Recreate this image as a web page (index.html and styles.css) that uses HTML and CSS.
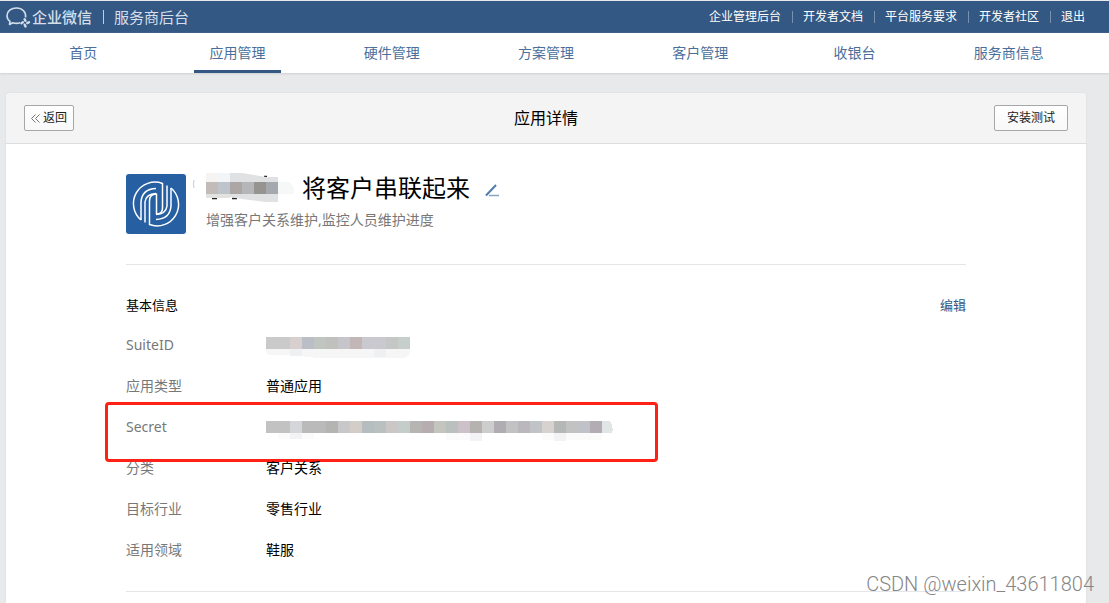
FILE: index.html
```html
<!DOCTYPE html>
<html lang="zh-CN">
<head>
<meta charset="utf-8">
<meta name="viewport" content="width=device-width, initial-scale=1">
<title>应用详情 - 服务商后台</title>
<link rel="stylesheet" href="styles.css">
</head>
<body>
<header class="topbar">
  <div class="brand">
    <svg class="brand-icon" width="25" height="22" viewBox="0 0 25 22" fill="none" stroke="#d5dfeb" aria-hidden="true">
      <path d="M19.500 11.500C20.500 6 16.200 2 10.500 2C5 2 1 5.400 1 9.700c0 2.400 1.200 4.300 3 5.700L3.500 18.500l3.300-1.700c2 .6 4.800.7 7.200 0" stroke-width="1.600" stroke-linejoin="round"/>
      <path d="M18.600 13.300l.9 1.500M23 16.200l-1.700.9M19.500 20.400l-.8-1.700M15.400 17.200l1.500-.9" stroke-width="2.400" stroke-linecap="round"/>
    </svg>
    <span class="brand-name">企业微信</span>
    <span class="brand-line"></span>
    <span class="brand-sub">服务商后台</span>
  </div>
  <nav class="toplinks">
    <a href="#">企业管理后台</a>
    <a href="#">开发者文档</a>
    <a href="#">平台服务要求</a>
    <a href="#">开发者社区</a>
    <a href="#">退出</a>
  </nav>
</header>
<nav class="mainnav">
  <a href="#">首页</a>
  <a href="#" class="active">应用管理</a>
  <a href="#">硬件管理</a>
  <a href="#">方案管理</a>
  <a href="#">客户管理</a>
  <a href="#">收银台</a>
  <a href="#">服务商信息</a>
</nav>
<main class="card">
  <div class="card-head">
    <button type="button" class="btn btn-back">
      <svg width="9" height="9" viewBox="0 0 9 9" fill="none" stroke="#777" aria-hidden="true"><path d="M4.500.5l-4 4 4 4M8.500.5l-4 4 4 4"/></svg>返回
    </button>
    <h1 class="card-title">应用详情</h1>
    <button type="button" class="btn btn-test">安装测试</button>
  </div>
  <div class="card-body">
    <section class="app">
      <svg class="app-logo" width="60" height="60" viewBox="0 0 60 60" aria-hidden="true">
        <rect width="60" height="60" rx="3" fill="#275fa3"/>
        <g fill="none" stroke="#fff" stroke-width="1.500" stroke-linejoin="round">
          <path d="M15 46A21.500 21.500 0 0 1 36.500 9.500V34q0 6-6 6V20q-7 0-7 7v23.500A21.500 21.500 0 0 0 45 14"/>
          <path d="M15 46V28q1-13 15-13.500"/>
          <path d="M45 14v18q-1 13-15 13.500"/>
          <path d="M19 48.500V28q1-8 11-8.500" />
          <path d="M41 11.500V32q-1 8-11 8.500"/>
        </g>
      </svg>
      <div class="app-text">
        <div class="app-name">
          <svg class="mask-name" width="101" height="30" viewBox="0 0 101 30" aria-hidden="true">
            <path d="M1 7q-1 4 0 8" fill="none" stroke="#b5cee8"/>
            <path d="M19 25.500h5M39 25.500h5M71 3.500h3" fill="none" stroke="#222" stroke-width="1.500"/>
            <path d="M13 0h12v24H13z" fill="#f5f4f2"/>
            <path d="M13 21h24v4H13z" fill="#e2e2e1"/>
            <path d="M25 0h12v9H25z" fill="#f2f6f9"/>
            <path d="M37 0h12l24 4h12v25H73l-24-3-12-2z" fill="#e0e1e2"/>
            <path d="M85 9h11q8 6 4 12H85z" fill="#f6f7f7"/>
            <path d="M13 9h12v12H13z" fill="#c3bbb7"/>
            <path d="M25 9h12v12H25z" fill="#bdc4cb"/>
            <path d="M37 9h12v12H37z" fill="#aca6a4"/>
            <path d="M49 9h12v12H49z" fill="#b4b6b9"/>
            <path d="M61 9h12v12H61z" fill="#959491"/>
            <path d="M73 9h12v12H73z" fill="#a5a9ad"/>
          </svg>
          <h2>将客户串联起来</h2>
          <button type="button" class="edit-name" aria-label="修改名称">
            <svg width="14" height="13" viewBox="0 0 14 13" fill="none"><path d="M1 11.500L11 1" stroke="#4f7cac" stroke-width="2"/><path d="M4 11.500h10" stroke="#86a5c6" stroke-width="1.500"/></svg>
          </button>
        </div>
        <p class="app-desc">增强客户关系维护,监控人员维护进度</p>
      </div>
    </section>
    <section class="info">
      <div class="info-head">
        <h3>基本信息</h3>
        <a href="#">编辑</a>
      </div>
      <dl class="rows">
        <div class="row"><dt>SuiteID</dt><dd>
          <svg class="mask" width="144" height="21" viewBox="0 0 144 21" shape-rendering="crispEdges" aria-hidden="true">
            <path d="M0 12h144v4q-1 5-10 5H52L24 18H6Q0 18 0 12z" fill="#f6f6f6"/>
            <path d="M24 12h12v7H24zM108 12h12v8H108z" fill="#eff0f2"/>
            <path d="M0 0h24v12H0z" fill="#cbcaca"/>
            <path d="M24 0h12v12H24z" fill="#d8cfcf"/>
            <path d="M36 0h12v12H36z" fill="#babfc7"/>
            <path d="M48 0h12v12H48z" fill="#c0c5c0"/>
            <path d="M60 0h12v12H60z" fill="#c0c0bd"/>
            <path d="M72 0h12v12H72z" fill="#c6c5cb"/>
            <path d="M84 0h12v12H84z" fill="#c2b6b7"/>
            <path d="M96 0h24v12H96z" fill="#cac9cf"/>
            <path d="M120 0h12v12H120z" fill="#c5c7c7"/>
            <path d="M132 0h12v12H132z" fill="#c6cfcc"/>
          </svg></dd></div>
        <div class="row"><dt>应用类型</dt><dd>普通应用</dd></div>
        <div class="row marked"><dt>Secret</dt><dd>
          <svg class="mask mask-secret" width="347" height="20" viewBox="0 0 347 20" shape-rendering="crispEdges" aria-hidden="true">
            <path d="M12 12h36v6H12zM180 12h24v7H180zM276 12h60v7H276z" fill="#fbfbfb"/>
            <path d="M24 12h12v6H24zM204 12h12v8H204zM288 12h12v8H288z" fill="#f3f3f5"/>
            <path d="M0 0h336v12H0z" fill="#c3c2c2"/>
            <path d="M24 0h12v12H24z" fill="#d5d6d9"/>
            <path d="M36 0h24v12H36z" fill="#bababa"/>
            <path d="M60 0h12v12H60z" fill="#b4b4b2"/>
            <path d="M72 0h12v12H72z" fill="#c8c8cb"/>
            <path d="M84 0h12v12H84z" fill="#d2cdc7"/>
            <path d="M96 0h12v12H96z" fill="#b6bdc1"/>
            <path d="M108 0h12v12H108z" fill="#babfbf"/>
            <path d="M120 0h12v12H120z" fill="#cbc7c6"/>
            <path d="M132 0h12v12H132z" fill="#c5cdca"/>
            <path d="M144 0h12v12H144z" fill="#b6b5b1"/>
            <path d="M156 0h12v12H156z" fill="#b5adb0"/>
            <path d="M168 0h12v12H168z" fill="#c3c5be"/>
            <path d="M180 0h12v12H180z" fill="#b9c0be"/>
            <path d="M192 0h12v12H192z" fill="#ccc1c7"/>
            <path d="M204 0h12v12H204z" fill="#b6b2b0"/>
            <path d="M216 0h12v12H216z" fill="#cdcdce"/>
            <path d="M228 0h12v12H228z" fill="#afadb1"/>
            <path d="M252 0h12v12H252z" fill="#bbb8bd"/>
            <path d="M264 0h12v12H264z" fill="#c1c4c6"/>
            <path d="M276 0h12v12H276z" fill="#d7d2cf"/>
            <path d="M288 0h12v12H288z" fill="#b5b8b6"/>
            <path d="M312 0h12v12H312z" fill="#c1c1c8"/>
            <path d="M324 0h12v12H324z" fill="#b3acb5"/>
            <path d="M336 0h8q4 6 2 12H336z" fill="#e0e6e5"/>
          </svg></dd></div>
        <div class="row"><dt>分类</dt><dd>客户关系</dd></div>
        <div class="row"><dt>目标行业</dt><dd>零售行业</dd></div>
        <div class="row"><dt>适用领域</dt><dd>鞋服</dd></div>
      </dl>
    </section>
  </div>
</main>
<div class="watermark">CSDN @weixin_43611804</div>
</body>
</html>
```
FILE: styles.css
```css
*,
*::before,
*::after {
  box-sizing: border-box;
}

html,
body {
  height: 100%;
}

body {
  margin: 0;
  display: flex;
  flex-direction: column;
  overflow: hidden;
  background: #e7e9eb;
  color: #000;
  font: 14px/20px "Noto Sans", "Noto Sans CJK SC", sans-serif;
}

h1,
h2,
h3,
p,
dl,
dd {
  margin: 0;
  font-weight: 400;
}

a {
  text-decoration: none;
}

.topbar {
  flex: none;
  display: flex;
  justify-content: space-between;
  align-items: center;
  height: 33px;
  padding: 0 24px 0 6px;
  border-top: 1px solid #e7e9ec;
  background: #335883;
}

.brand {
  display: flex;
  align-items: center;
  color: #d5dfeb;
  font-size: 15px;
}

.brand-name {
  margin-left: 1px;
  font-weight: 500;
}

.brand-line {
  width: 1px;
  height: 14px;
  margin: 0 10px 0 11px;
  background: #c2cedb;
}

.toplinks {
  display: flex;
  font-size: 12px;
}

.toplinks a {
  display: flex;
  align-items: center;
  color: #fff;
}

.toplinks a + a::before {
  content: "";
  width: 1px;
  height: 12px;
  margin: 0 10px 0 11px;
  background: #7791ae;
}

.mainnav {
  flex: none;
  display: flex;
  height: 40px;
  padding: 0 23px 0 6px;
  background: #fff;
  box-shadow: 0 1px 2px #cfd1d4;
}

.mainnav a {
  flex: 1;
  display: flex;
  flex-direction: column;
  align-items: center;
  justify-content: center;
  color: #4b6f9b;
}

.mainnav .active {
  justify-content: space-between;
  padding-top: 10px;
}

.mainnav .active::after {
  content: "";
  width: 87px;
  height: 3px;
  background: #335883;
}

.card {
  flex: 1;
  min-height: 0;
  margin: 20px 23px 0 6px;
  border-radius: 4px 4px 0 0;
  background: #fff;
  box-shadow: 0 0 2px #d5d7da;
}

.card-head {
  display: grid;
  grid-template-columns: 1fr auto 1fr;
  align-items: center;
  height: 51px;
  padding: 0 18px;
  border-bottom: 1px solid #dcdddf;
  border-radius: 4px 4px 0 0;
  background: #f4f4f4;
}

.card-title {
  font-size: 16px;
}

.btn {
  display: flex;
  align-items: center;
  justify-content: center;
  height: 26px;
  padding: 0;
  border: 1px solid #a5a7a9;
  border-radius: 2px;
  background: linear-gradient(#fff, #f8f8f8);
  color: #222;
  font: inherit;
  font-size: 12px;
}

.btn-back {
  gap: 3px;
  width: 50px;
}

.btn-test {
  justify-self: end;
  width: 74px;
}

.card-body {
  padding: 30px 120px 0;
}

.app {
  display: flex;
  height: 91px;
  border-bottom: 1px solid #e4e6e9;
}

.app-text {
  margin-left: 7px;
}

.app-name {
  display: flex;
  align-items: center;
  height: 28px;
}

.app-name h2 {
  margin-left: 8px;
  font-size: 24px;
  line-height: 28px;
}

.edit-name {
  display: flex;
  margin-left: 15px;
  padding: 4px 0 0;
  border: 0;
  background: none;
}

.app-desc {
  padding: 8px 0 0 13px;
  color: #787878;
}

.info {
  padding-top: 30px;
  border-bottom: 1px solid #e4e6e9;
}

.info-head {
  display: flex;
  justify-content: space-between;
  font-size: 13px;
}

.info-head a {
  color: #335883;
}

.info-head h3 {
  font-size: 13px;
}

.rows {
  padding: 9px 0 21px;
}

.row {
  position: relative;
  display: flex;
  align-items: center;
  height: 41px;
}

.row dt {
  width: 140px;
  color: #787878;
}

.mask {
  display: block;
  margin-top: 6px;
}

.mask-secret {
  margin-top: 9px;
}

.marked::after {
  content: "";
  position: absolute;
  top: -4px;
  left: -21px;
  width: 553px;
  height: 60px;
  border: 3px solid #ff2016;
  border-radius: 4px;
}

.watermark {
  position: absolute;
  right: 15px;
  bottom: 7px;
  color: #858688;
  font: 300 20px/24px Roboto, sans-serif;
}
```
